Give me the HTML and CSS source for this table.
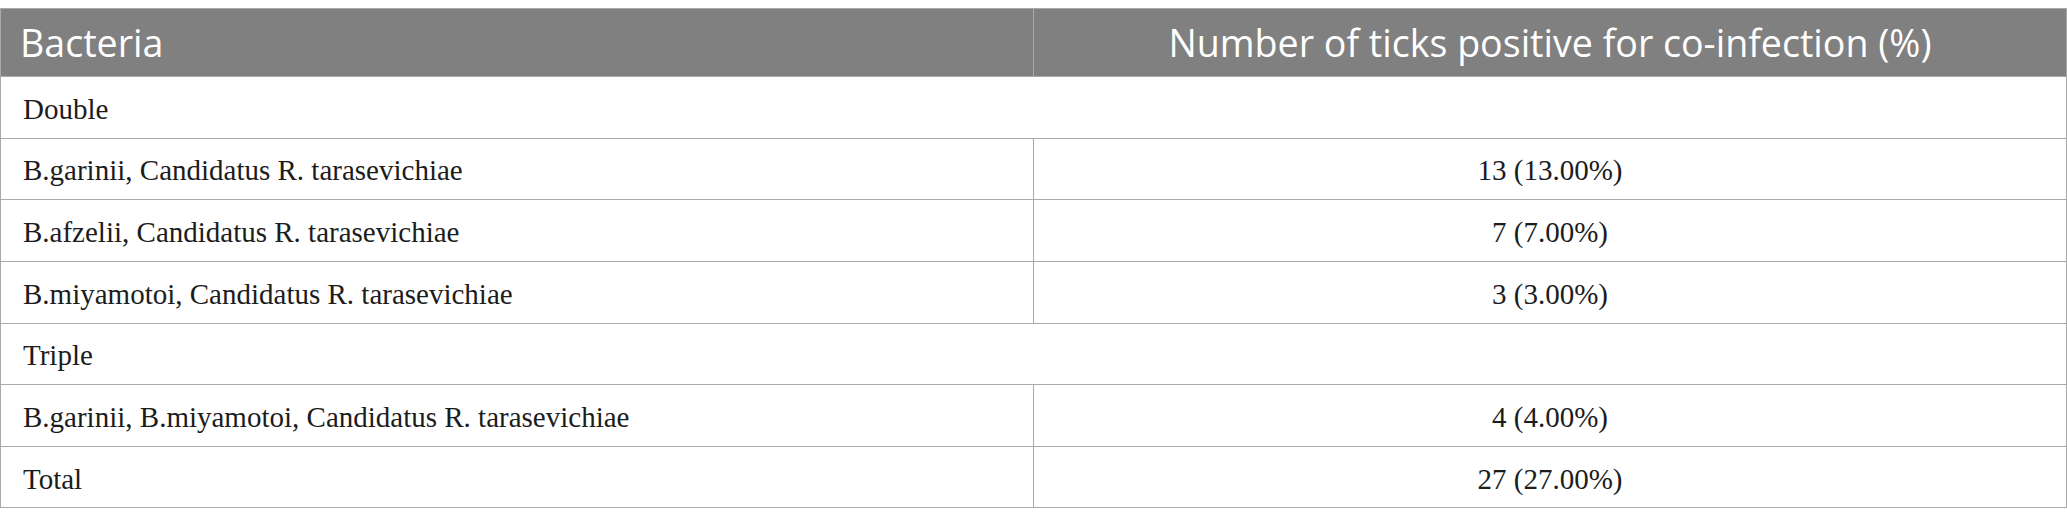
FILE: index.html
```html
<!DOCTYPE html>
<html lang="en">
<head>
<meta charset="utf-8">
<title>Co-infection table</title>
<link rel="stylesheet" href="styles.css">
</head>
<body>
<div class="wrap">
<table class="data">
  <thead>
    <tr>
      <th class="h-left">Bacteria</th>
      <th class="h-center">Number of ticks positive for co-infection (%)</th>
    </tr>
  </thead>
  <tbody>
    <tr><td colspan="2">Double</td></tr>
    <tr><td>B.garinii, Candidatus R. tarasevichiae</td><td class="num">13 (13.00%)</td></tr>
    <tr><td>B.afzelii, Candidatus R. tarasevichiae</td><td class="num">7 (7.00%)</td></tr>
    <tr><td>B.miyamotoi, Candidatus R. tarasevichiae</td><td class="num">3 (3.00%)</td></tr>
    <tr><td colspan="2">Triple</td></tr>
    <tr><td>B.garinii, B.miyamotoi, Candidatus R. tarasevichiae</td><td class="num">4 (4.00%)</td></tr>
    <tr><td>Total</td><td class="num">27 (27.00%)</td></tr>
  </tbody>
</table>
</div>
</body>
</html>
```

FILE: styles.css
```css
html, body {
  margin: 0;
  padding: 0;
  background: #ffffff;
}

.wrap {
  padding-top: 8px;
}

.data {
  width: 2067px;
  border-collapse: collapse;
  table-layout: fixed;
}

.data th,
.data td {
  border: 1px solid #a9a9a9;
  width: 50%;
}

.data th {
  background: #7f807f;
  color: #ffffff;
  font-family: "Open Sans", "DejaVu Sans", sans-serif;
  font-weight: 400;
  font-size: 37.6px;
  height: 68px;
  padding: 0 0 0 19px;
  line-height: 1;
  vertical-align: middle;
  box-sizing: border-box;
}

.data th.h-left {
  text-align: left;
}

.data th.h-center {
  text-align: center;
  padding-left: 0;
}

.data td {
  font-family: "Liberation Serif", "Times New Roman", serif;
  font-size: 29px;
  color: #1c1c1c;
  height: 61.65px;
  padding: 4px 0 0 22px;
  line-height: 1;
  vertical-align: middle;
  text-align: left;
  box-sizing: border-box;
}

.data td.num {
  text-align: center;
  padding-left: 0;
}
```
